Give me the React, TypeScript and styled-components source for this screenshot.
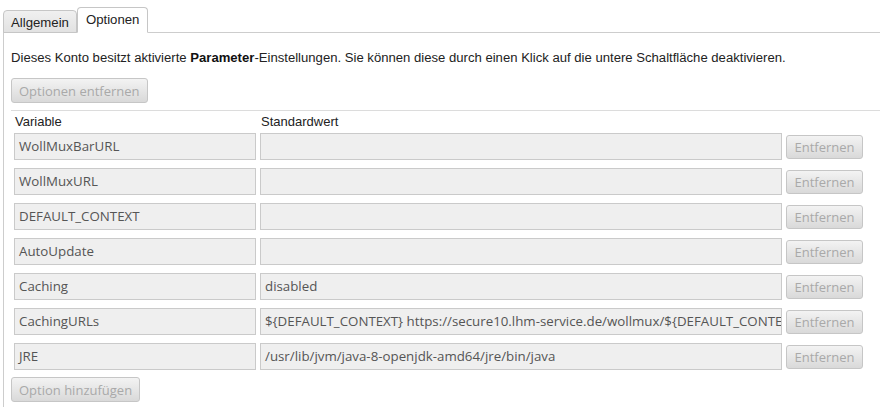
import React from "react";
import styled, { createGlobalStyle } from "styled-components";

const Global = createGlobalStyle`
  html, body { margin: 0; padding: 0; background: #ffffff; }
  body { font-family: "Liberation Sans", Arial, sans-serif; font-size: 13px; color: #222; }
`;

const Page = styled.div`
  width: 880px;
  height: 407px;
  overflow: hidden;
  padding: 7px 0 0 3px;
  box-sizing: border-box;
  display: flex;
  flex-direction: column;
`;

const TabBar = styled.div`
  display: flex;
  align-items: flex-end;
  height: 26px;
  position: relative;
  z-index: 1;
`;

const Tab = styled.div<{ $active?: boolean }>`
  box-sizing: border-box;
  height: ${(p) => (p.$active ? "26px" : "23px")};
  padding: ${(p) => (p.$active ? "3px 8px 0" : "3px 7px 0")};
  border: 1px solid #c6c6c6;
  border-bottom: ${(p) => (p.$active ? "1px solid #ffffff" : "1px solid #c6c6c6")};
  border-radius: 4px 4px 0 0;
  background: ${(p) => (p.$active ? "#ffffff" : "linear-gradient(#f0f0f0, #e2e2e2)")};
  font-size: 13.2px;
  color: #222;
  line-height: 17px;
`;

const Panel = styled.div`
  flex: 1;
  margin-top: -1px;
  border-top: 1px solid #cdcdcd;
  border-left: 1px solid #cdcdcd;
  padding: 17px 0 0 7px;
  display: flex;
  flex-direction: column;
`;

const Intro = styled.p`
  margin: 0;
  font-size: 13.12px;
  line-height: 16px;
  color: #222;
  b { font-weight: bold; color: #111; }
`;

const Button = styled.button`
  box-sizing: border-box;
  height: 25px;
  padding: 0 7px;
  border: 1px solid #c6c6c6;
  border-radius: 3px;
  background: linear-gradient(#f3f3f3, #d9d9d9);
  font-family: "Open Sans", sans-serif;
  font-size: 13px;
  color: #a9a9a9;
  cursor: default;
  white-space: nowrap;
`;

const TopButton = styled(Button)`
  align-self: flex-start;
  margin-top: 12px;
`;

const Table = styled.div`
  margin-top: 7px;
  border-top: 1px solid #dcdcdc;
  padding: 3px 0 0 3px;
  display: grid;
  grid-template-columns: 242px 522px 77px;
  column-gap: 4px;
  row-gap: 8px;
  align-items: center;
`;

const Header = styled.div`
  font-size: 13px;
  line-height: 15px;
  color: #222;
  margin-bottom: -4px;
  padding-left: 1px;
`;

const Field = styled.div`
  box-sizing: border-box;
  height: 27px;
  border: 1px solid #cacaca;
  background: #efefef;
  padding: 0 4px;
  font-family: "Open Sans", sans-serif;
  font-size: 13.3px;
  line-height: 25px;
  color: #555;
  white-space: nowrap;
  overflow: hidden;
`;

const RowButton = styled(Button)`
  height: 24px;
  width: 77px;
  padding: 0;
`;

const AddButton = styled(Button)`
  align-self: flex-start;
  margin-top: 7px;
`;

const rows: [string, string][] = [
  ["WollMuxBarURL", ""],
  ["WollMuxURL", ""],
  ["DEFAULT_CONTEXT", ""],
  ["AutoUpdate", ""],
  ["Caching", "disabled"],
  ["CachingURLs", "${DEFAULT_CONTEXT} https://secure10.lhm-service.de/wollmux/${DEFAULT_CONTEXT}"],
  ["JRE", "/usr/lib/jvm/java-8-openjdk-amd64/jre/bin/java"],
];

export default function App() {
  return (
    <>
      <Global />
      <Page>
        <TabBar>
          <Tab>Allgemein</Tab>
          <Tab $active>Optionen</Tab>
        </TabBar>
        <Panel>
          <Intro>
            Dieses Konto besitzt aktivierte <b>Parameter</b>-Einstellungen. Sie können diese durch einen Klick auf die untere Schaltfläche deaktivieren.
          </Intro>
          <TopButton disabled>Optionen entfernen</TopButton>
          <Table>
            <Header>Variable</Header>
            <Header>Standardwert</Header>
            <div />
            {rows.map(([k, v]) => (
              <React.Fragment key={k}>
                <Field>{k}</Field>
                <Field>{v}</Field>
                <RowButton disabled>Entfernen</RowButton>
              </React.Fragment>
            ))}
          </Table>
          <AddButton disabled>Option hinzufügen</AddButton>
        </Panel>
      </Page>
    </>
  );
}
